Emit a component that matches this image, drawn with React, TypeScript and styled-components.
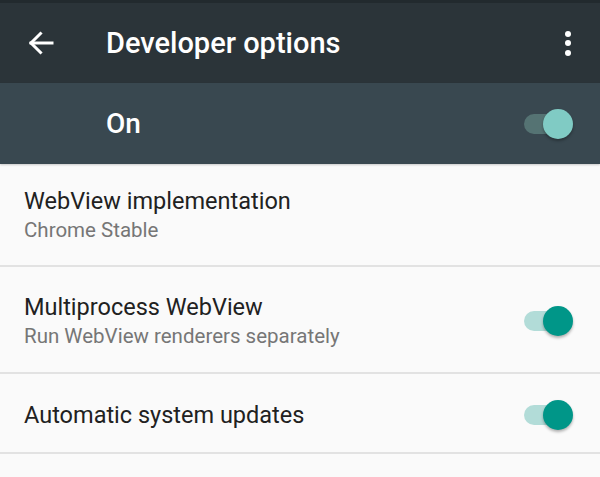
import React from "react";
import styled, { createGlobalStyle } from "styled-components";

const Global = createGlobalStyle`
  html, body { margin: 0; padding: 0; background: #fafafa; }
  body { font-family: Roboto, "Noto Sans", sans-serif; -webkit-font-smoothing: antialiased; }
`;

const Page = styled.div`
  width: 600px;
  height: 477px;
  overflow: hidden;
  background: #fafafa;
  display: flex;
  flex-direction: column;
`;

const Toolbar = styled.header`
  height: 83px;
  box-sizing: border-box;
  background: #2b3439;
  border-top: 3px solid #222a2e;
  display: flex;
  align-items: center;
  padding: 0 0 0 24px;
  color: #fff;
`;

const IconButton = styled.div`
  width: 34px;
  height: 34px;
  display: flex;
  align-items: center;
  justify-content: center;
`;

const Title = styled.h1`
  margin: 0 0 0 48px;
  flex: 1;
  font-size: 29px;
  font-weight: 500;
  letter-spacing: 0;
  color: #fff;
`;

const Menu = styled.div`
  width: 40px;
  display: flex;
  flex-direction: column;
  align-items: center;
  gap: 3.5px;
  margin-right: 12px;
`;

const Dot = styled.span`
  width: 6px;
  height: 6px;
  border-radius: 50%;
  background: #fff;
`;

const MasterBar = styled.div`
  height: 81px;
  background: #394850;
  display: flex;
  align-items: center;
  padding: 0 28px 0 106px;
  box-shadow: 0 1px 2px rgba(0,0,0,0.2);
  position: relative;
  z-index: 1;
`;

const MasterLabel = styled.div`
  flex: 1;
  font-size: 28px;
  font-weight: 500;
  color: #fff;
`;

const List = styled.div`
  display: flex;
  flex-direction: column;
`;

const Row = styled.div<{ $h: number; $pt?: number }>`
  height: ${(p) => p.$h}px;
  box-sizing: border-box;
  display: flex;
  align-items: center;
  padding: ${(p) => p.$pt ?? 0}px 28px 0 24px;
  border-bottom: 2px solid #e2e2e2;
`;

const Texts = styled.div`
  flex: 1;
  display: flex;
  flex-direction: column;
`;

const RowTitle = styled.div`
  font-size: 23.5px;
  color: #212121;
  line-height: 30px;
`;

const RowSub = styled.div`
  font-size: 20.5px;
  color: #767676;
  line-height: 28px;
`;

const Track = styled.div<{ $dark?: boolean }>`
  position: relative;
  width: 48px;
  height: 20px;
  border-radius: 10px;
  background: ${(p) => (p.$dark ? "#557373" : "#b2dcd8")};
`;

const Thumb = styled.div<{ $dark?: boolean }>`
  position: absolute;
  right: -1px;
  top: 50%;
  width: 30px;
  height: 30px;
  margin-top: -15px;
  border-radius: 50%;
  background: ${(p) => (p.$dark ? "#80cbc4" : "#009688")};
  box-shadow: 0 2px 3px rgba(0, 0, 0, 0.3);
`;

const Switch = ({ dark }: { dark?: boolean }) => (
  <Track $dark={dark}>
    <Thumb $dark={dark} />
  </Track>
);

export default function App() {
  return (
    <Page>
      <Global />
      <Toolbar>
        <IconButton>
          <svg width="26" height="24" viewBox="0 0 26 24" fill="none" stroke="#fff" strokeWidth="3" strokeLinecap="square">
            <path d="M3 12 H24" />
            <path d="M12.5 2.5 L3 12 L12.5 21.5" />
          </svg>
        </IconButton>
        <Title>Developer options</Title>
        <Menu>
          <Dot />
          <Dot />
          <Dot />
        </Menu>
      </Toolbar>
      <MasterBar>
        <MasterLabel>On</MasterLabel>
        <Switch dark />
      </MasterBar>
      <List>
        <Row $h={103}>
          <Texts>
            <RowTitle>WebView implementation</RowTitle>
            <RowSub>Chrome Stable</RowSub>
          </Texts>
        </Row>
        <Row $h={107} $pt={3}>
          <Texts>
            <RowTitle>Multiprocess WebView</RowTitle>
            <RowSub>Run WebView renderers separately</RowSub>
          </Texts>
          <Switch />
        </Row>
        <Row $h={80} $pt={3}>
          <Texts>
            <RowTitle>Automatic system updates</RowTitle>
          </Texts>
          <Switch />
        </Row>
      </List>
    </Page>
  );
}
